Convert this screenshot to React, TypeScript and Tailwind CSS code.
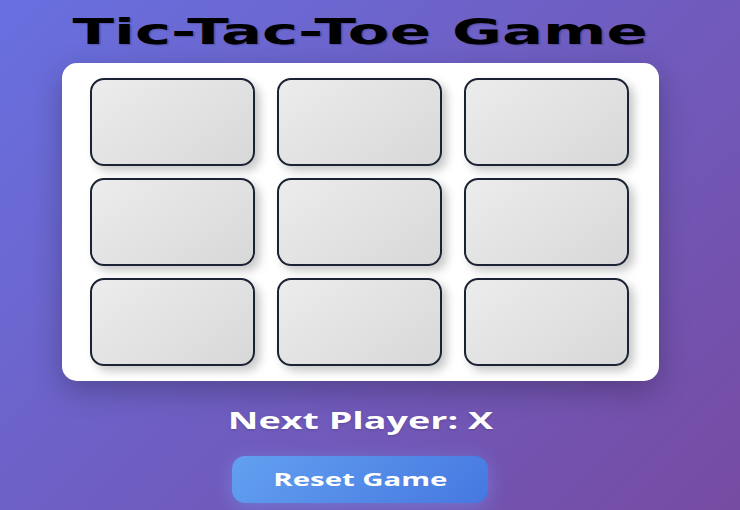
import React from "react";

export default function App() {
  const cells = Array.from({ length: 9 });
  return (
    <div className="w-[740px] h-[510px] overflow-hidden bg-[linear-gradient(135deg,#6870e0_0%,#764ba2_100%)] flex flex-col items-center pr-[20px]">
      <h1 className="mt-[9px] h-[46px] leading-[46px] text-[36px] text-black font-bold [font-family:'DejaVu_Sans',sans-serif] [text-shadow:1px_1px_1px_rgba(0,0,0,0.2)]">
        <span className="inline-block [transform:scaleX(1.69)]">Tic-Tac-Toe Game</span>
      </h1>
      <div className="mt-[8px] w-[597px] h-[318px] bg-white rounded-[15px] shadow-[0_10px_30px_rgba(0,0,0,0.25)] pl-[28px] pr-[29px] pt-[15px] pb-[15px] grid grid-cols-3 grid-rows-3 gap-x-[22px] gap-y-[12px]">
        {cells.map((_, i) => (
          <button
            key={i}
            className="w-[165px] h-[88px] rounded-[14px] border-2 border-[#1a2233] bg-[linear-gradient(145deg,#ececec,#d8d8d8)] shadow-[5px_5px_10px_rgba(0,0,0,0.22)]"
          />
        ))}
      </div>
      <div className="mt-[22px] h-[34px] leading-[34px] text-[24px] font-bold text-white [font-family:'Open_Sans',sans-serif] [text-shadow:0_1px_2px_rgba(0,0,0,0.2)]">
        <span className="inline-block [transform:scaleX(1.57)]">Next Player: X</span>
      </div>
      <button className="mt-[19px] w-[256px] h-[47px] rounded-[13px] bg-[linear-gradient(135deg,#62a0f0,#4678e0)] shadow-[0_4px_20px_rgba(120,170,255,0.4)] text-white text-[18px] font-bold [font-family:'Open_Sans',sans-serif]">
        <span className="inline-block [transform:scaleX(1.63)]">Reset Game</span>
      </button>
    </div>
  );
}
